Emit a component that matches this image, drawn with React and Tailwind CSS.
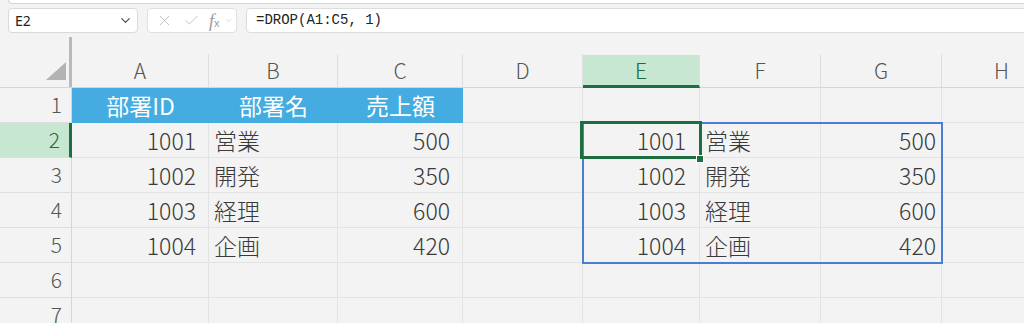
import { ChevronDown, X, Check } from 'lucide-react';

const cols = [
  { key: 'A', w: 'w-[137px]', pr: 'pr-[12px]' },
  { key: 'B', w: 'w-[129px]', pr: 'pr-[12px]' },
  { key: 'C', w: 'w-[125px]', pr: 'pr-[12px]' },
  { key: 'D', w: 'w-[120px]', pr: 'pr-[12px]' },
  { key: 'E', w: 'w-[117px]', pr: 'pr-[13px]' },
  { key: 'F', w: 'w-[121px]', pr: 'pr-[12px]' },
  { key: 'G', w: 'w-[121px]', pr: 'pr-[5px]' },
  { key: 'H', w: 'w-[120px]', pr: 'pr-[12px]' },
];

const src = [
  ['1001', '営業', '500'],
  ['1002', '開発', '350'],
  ['1003', '経理', '600'],
  ['1004', '企画', '420'],
];

// 各行のセル内容 [値, 揃え]
const rows = [
  [['部署ID', 'head'], ['部署名', 'head'], ['売上額', 'head'], null, null, null, null, null],
  ...src.map((r) => [
    [r[0], 'num'], [r[1], 'txt'], [r[2], 'num'], null,
    [r[0], 'num'], [r[1], 'txt'], [r[2], 'num'], null,
  ]),
  [null, null, null, null, null, null, null, null],
  [null, null, null, null, null, null, null, null],
];

const font = { fontFamily: '"Noto Sans CJK JP", "Noto Sans", sans-serif' };

function Cell({ col, v }) {
  if (v && v[1] === 'head') {
    return (
      <div className={`${col.w} h-full shrink-0 bg-[#44ace0] text-white flex items-center justify-center text-[23px]`}>
        {v[0]}
      </div>
    );
  }
  return (
    <div
      className={`${col.w} h-full shrink-0 border-r border-b border-[#e3e3e3] flex items-center text-[23px] font-light text-[#3a3a3a] ${
        v && v[1] === 'num' ? `justify-end ${col.pr}` : 'justify-start pl-[5px]'
      }`}
    >
      {v ? v[0] : ''}
    </div>
  );
}

export default function App() {
  return (
    <div className="w-[1024px] h-[323px] overflow-hidden bg-[#f3f3f3] relative" style={font}>
      {/* リボン下端 */}
      <div className="h-[4px] ml-[8px] bg-white border-b border-l border-[#d4d4d4] rounded-bl-[6px]" />

      {/* 数式バー */}
      <div className="flex items-center h-[25px] mt-[4px] pl-[8px] gap-[9px]">
        <div className="w-[130px] h-full bg-white border border-[#d9d9d9] rounded-[4px] flex items-center justify-between pl-[6px] pr-[4px]">
          <span className="text-[14px] text-[#222]" style={{ fontFamily: '"Noto Sans", sans-serif' }}>E2</span>
          <ChevronDown size={15} strokeWidth={1.8} className="text-[#444]" />
        </div>
        <div className="w-[90px] h-full bg-white border border-[#e0e0e0] rounded-[4px] flex items-center pl-[8px] gap-[10px] text-[#b5b5b5]">
          <X size={17} strokeWidth={1.2} />
          <Check size={17} strokeWidth={1.2} />
          <span className="flex items-baseline text-[#9a9a9a] -ml-[1px]">
            <span className="italic text-[18px] leading-none" style={{ fontFamily: '"Liberation Serif", serif' }}>f</span>
            <span className="text-[11px] leading-none" style={{ fontFamily: '"Liberation Sans", sans-serif' }}>x</span>
            <ChevronDown size={9} strokeWidth={1.5} className="ml-[4px] text-[#bbb] self-center" />
          </span>
        </div>
        <div className="flex-1 h-full -mr-[20px] bg-white border border-[#dcdcdc] rounded-[4px] flex items-center pl-[9px]">
          <span className="text-[14px] text-[#222]" style={{ fontFamily: '"Liberation Mono", monospace' }}>=DROP(A1:C5, 1)</span>
        </div>
      </div>

      {/* 列見出し */}
      <div className="flex h-[55px] border-b border-[#d6d6d6]">
        <div className="w-[72px] shrink-0 h-full relative">
          <div className="absolute right-0 top-[4px] bottom-0 w-[3px] bg-[#b9b9b9]" />
          <svg className="absolute left-[46px] top-[29px]" width="21" height="19" viewBox="0 0 21 19">
            <polygon points="0,18 20,18 20,0" fill="#b3b3b3" />
          </svg>
        </div>
        {cols.map((c) => (
          <div key={c.key} className={`${c.w} shrink-0 h-full flex flex-col justify-end`}>
            <div
              className={`h-[33px] flex items-center justify-center text-[21px] font-light border-r border-[#dedede] ${
                c.key === 'E'
                  ? 'bg-[#c8e7d3] text-[#1d6b3f] border-b-[3px] border-b-[#1d6f42] -mb-px pt-[2px]'
                  : 'text-[#555]'
              }`}
            >
              {c.key}
            </div>
          </div>
        ))}
      </div>

      {/* 本体 */}
      <div className="relative">
        {rows.map((r, i) => (
          <div key={i} className="flex h-[35px]">
            <div
              className={`w-[72px] shrink-0 h-full flex items-center justify-end pr-[9px] text-[21px] font-light border-b border-[#dedede] ${
                i === 1
                  ? 'bg-[#c8e7d3] text-[#1d6b3f] border-r-[3px] border-r-[#1d6f42]'
                  : 'text-[#555] border-r border-r-[#d6d6d6]'
              }`}
            >
              {i + 1}
            </div>
            {cols.map((c, j) => (
              <Cell key={c.key} col={c} v={r[j]} />
            ))}
          </div>
        ))}

        {/* スピル範囲 */}
        <div className="absolute left-[582px] top-[34px] w-[361px] h-[142px] border-2 border-[#4a7dd6] pointer-events-none" />
        {/* アクティブセル */}
        <div className="absolute left-[580px] top-[33px] w-[122px] h-[38px] border-[3px] border-[#1d6f42] pointer-events-none" />
        <div className="absolute left-[696px] top-[67px] w-[8px] h-[8px] bg-[#1d6f42] border border-white" />
      </div>
    </div>
  );
}
